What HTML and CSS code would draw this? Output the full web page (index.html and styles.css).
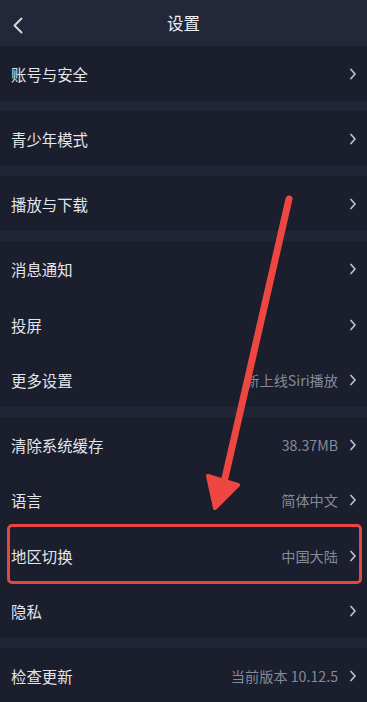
FILE: index.html
```html
<!DOCTYPE html>
<html lang="zh-CN">
<head>
<meta charset="utf-8">
<title>设置</title>
<link rel="stylesheet" href="styles.css">
</head>
<body>
<div class="page">
  <header class="nav">
    <svg class="back" width="12" height="17" viewBox="0 0 12 17"><path d="M9.5 1.5 L2.5 8.5 L9.5 15.5" fill="none" stroke="#d6d8de" stroke-width="2" stroke-linecap="round" stroke-linejoin="round"/></svg>
    <h1 class="title">设置</h1>
  </header>
  <main class="list">
    <section class="group">
      <div class="row"><span class="label">账号与安全</span><svg class="chev" viewBox="0 0 8 12"><path d="M2 1.5 L6 6 L2 10.5" /></svg></div>
    </section>
    <section class="group">
      <div class="row"><span class="label">青少年模式</span><svg class="chev" viewBox="0 0 8 12"><path d="M2 1.5 L6 6 L2 10.5" /></svg></div>
    </section>
    <section class="group">
      <div class="row"><span class="label">播放与下载</span><svg class="chev" viewBox="0 0 8 12"><path d="M2 1.5 L6 6 L2 10.5" /></svg></div>
    </section>
    <section class="group">
      <div class="row"><span class="label">消息通知</span><svg class="chev" viewBox="0 0 8 12"><path d="M2 1.5 L6 6 L2 10.5" /></svg></div>
      <div class="row"><span class="label">投屏</span><svg class="chev" viewBox="0 0 8 12"><path d="M2 1.5 L6 6 L2 10.5" /></svg></div>
      <div class="row"><span class="label">更多设置</span><span class="value">新上线Siri播放</span><svg class="chev" viewBox="0 0 8 12"><path d="M2 1.5 L6 6 L2 10.5" /></svg></div>
    </section>
    <section class="group">
      <div class="row"><span class="label">清除系统缓存</span><span class="value">38.37MB</span><svg class="chev" viewBox="0 0 8 12"><path d="M2 1.5 L6 6 L2 10.5" /></svg></div>
      <div class="row"><span class="label">语言</span><span class="value">简体中文</span><svg class="chev" viewBox="0 0 8 12"><path d="M2 1.5 L6 6 L2 10.5" /></svg></div>
      <div class="row"><span class="label">地区切换</span><span class="value">中国大陆</span><svg class="chev" viewBox="0 0 8 12"><path d="M2 1.5 L6 6 L2 10.5" /></svg></div>
      <div class="row"><span class="label">隐私</span><svg class="chev" viewBox="0 0 8 12"><path d="M2 1.5 L6 6 L2 10.5" /></svg></div>
    </section>
    <section class="group">
      <div class="row"><span class="label">检查更新</span><span class="value">当前版本 10.12.5</span><svg class="chev" viewBox="0 0 8 12"><path d="M2 1.5 L6 6 L2 10.5" /></svg></div>
    </section>
  </main>
  <div class="highlight"></div>
  <svg class="annot" width="367" height="702" viewBox="0 0 367 702">
    <line x1="289" y1="199" x2="225" y2="478" stroke="#ee4741" stroke-width="7" stroke-linecap="round"/>
    <polygon points="208,476 238,485 215,508" fill="#ee4741" stroke="#ee4741" stroke-width="4" stroke-linejoin="round"/>
  </svg>
</div>
</body>
</html>
```

FILE: styles.css
```css
* { box-sizing: border-box; }
html, body { margin: 0; padding: 0; }
body {
  background: #1a1e2d;
  font-family: "Noto Sans CJK SC", "Noto Sans", sans-serif;
  color: #e4e6ec;
}
.page {
  position: relative;
  width: 367px;
  height: 702px;
  overflow: hidden;
  background: #1a1e2d;
}
.nav {
  height: 46px;
  background: #222739;
  display: flex;
  align-items: center;
  justify-content: center;
  position: relative;
}
.back {
  position: absolute;
  left: 12px;
  top: 17px;
}
.title {
  margin: 0;
  font-size: 16.5px;
  font-weight: 400;
  color: #eceef2;
  line-height: 1;
}
.list {
  display: flex;
  flex-direction: column;
  gap: 9.6px;
  background: #212637;
}
.group {
  background: #1a1e2d;
  display: flex;
  flex-direction: column;
}
.row {
  height: 55.4px;
  display: flex;
  align-items: center;
  padding: 1px 10px 0 11px;
}
.label {
  flex: 1;
  font-size: 15.4px;
  color: #e4e6ec;
  white-space: nowrap;
}
.value {
  font-size: 14.2px;
  color: #858a98;
  white-space: nowrap;
}
.chev {
  width: 8px;
  height: 12px;
  margin-left: 11px;
  flex: none;
}
.chev path {
  fill: none;
  stroke: #b9bcc4;
  stroke-width: 1.8;
  stroke-linecap: round;
  stroke-linejoin: round;
}
.highlight {
  position: absolute;
  left: 7px;
  top: 524px;
  width: 355px;
  height: 60px;
  border: 3px solid #e8453e;
  border-radius: 5px;
}
.annot {
  position: absolute;
  left: 0;
  top: 0;
  pointer-events: none;
}
```
